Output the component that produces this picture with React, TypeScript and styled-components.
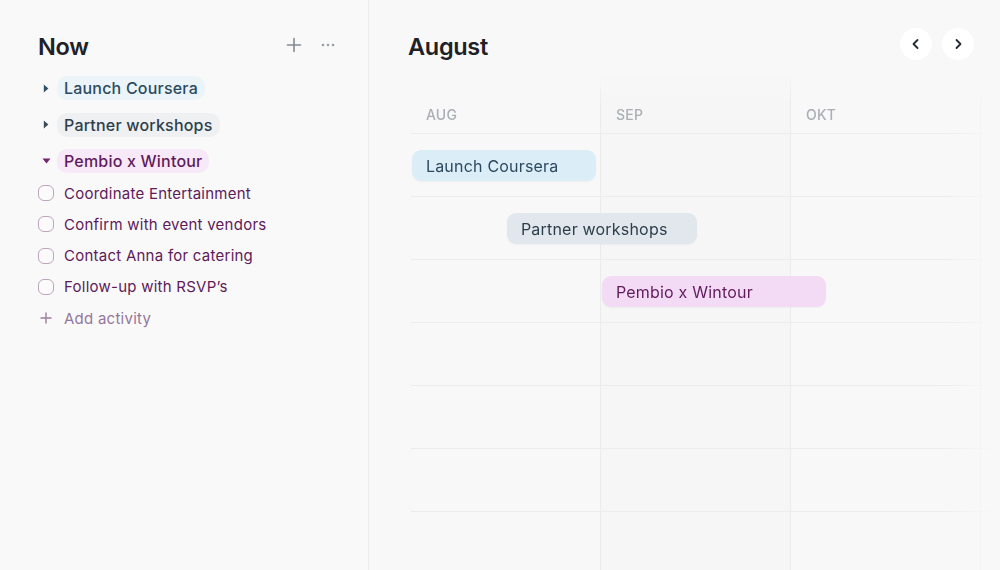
import React from 'react'
import styled, { createGlobalStyle } from 'styled-components'

type Tone = 'blue' | 'slate' | 'plum'

interface ITask {
  id: number
  title: string
}

interface IProject {
  id: number
  title: string
  tone: Tone
  open: boolean
  tasks: ITask[]
  // position on the timeline, in months from the start of AUG
  start: number
  length: number
}

const tones: { [key in Tone]: { pill: string; bar: string; text: string; caret: string } } = {
  blue: { pill: '#ebf4f9', bar: '#dbedf7', text: '#2c4a5e', caret: '#2f5269' },
  slate: { pill: '#eef0f2', bar: '#e1e7ec', text: '#2d3e4b', caret: '#3d4b56' },
  plum: { pill: '#f7e9f7', bar: '#f3dbf6', text: '#611a5b', caret: '#71276b' },
}

const projects: IProject[] = [
  { id: 1, title: 'Launch Coursera', tone: 'blue', open: false, tasks: [], start: 0.005, length: 0.97 },
  { id: 2, title: 'Partner workshops', tone: 'slate', open: false, tasks: [], start: 0.505, length: 1.0 },
  {
    id: 3,
    title: 'Pembio x Wintour',
    tone: 'plum',
    open: true,
    tasks: [
      { id: 1, title: 'Coordinate Entertainment' },
      { id: 2, title: 'Confirm with event vendors' },
      { id: 3, title: 'Contact Anna for catering' },
      { id: 4, title: 'Follow-up with RSVP’s' },
    ],
    start: 1.005,
    length: 1.18,
  },
]

const months = ['AUG', 'SEP', 'OKT']
const COLUMN = 190
const ROWS = 7

export default function App() {
  return (
    <>
      <GlobalStyle />
      <Page>
        <Sidebar>
          <SideHeader>
            <Title>Now</Title>
            <Actions>
              <IconButton aria-label="Add">
                <svg width="16" height="16" viewBox="0 0 16 16" fill="none">
                  <path d="M8 1.5v13M1.5 8h13" stroke="#858b94" strokeWidth="1.6" strokeLinecap="round" />
                </svg>
              </IconButton>
              <IconButton aria-label="More">
                <svg width="16" height="16" viewBox="0 0 16 16" fill="#9aa0a8">
                  <circle cx="3" cy="8" r="1.3" />
                  <circle cx="8" cy="8" r="1.3" />
                  <circle cx="13" cy="8" r="1.3" />
                </svg>
              </IconButton>
            </Actions>
          </SideHeader>

          <ProjectList>
            {projects.map((project) => (
              <Group key={project.id}>
                <GroupRow>
                  <Caret>
                    {project.open ? (
                      <svg width="9" height="6" viewBox="0 0 9 6">
                        <path d="M0.5 0.6h8L4.5 5.4z" fill={tones[project.tone].caret} />
                      </svg>
                    ) : (
                      <svg width="6" height="9" viewBox="0 0 6 9">
                        <path d="M0.8 0.5v8L5.4 4.5z" fill={tones[project.tone].caret} />
                      </svg>
                    )}
                  </Caret>
                  <Pill tone={project.tone}>{project.title}</Pill>
                </GroupRow>

                {project.open && (
                  <TaskList>
                    {project.tasks.map((task) => (
                      <Task key={task.id}>
                        <Checkbox />
                        {task.title}
                      </Task>
                    ))}
                    <AddTask>
                      <AddIcon>
                        <svg width="12" height="12" viewBox="0 0 12 12" fill="none">
                          <path d="M6 1v10M1 6h10" stroke="#9b7f99" strokeWidth="1.4" strokeLinecap="round" />
                        </svg>
                      </AddIcon>
                      Add activity
                    </AddTask>
                  </TaskList>
                )}
              </Group>
            ))}
          </ProjectList>
        </Sidebar>

        <Main>
          <MainHeader>
            <Title>August</Title>
            <Nav>
              <NavButton aria-label="Previous">
                <svg width="14" height="14" viewBox="0 0 14 14" fill="none">
                  <path d="M8.5 3L4.5 7l4 4" stroke="#262b33" strokeWidth="1.8" strokeLinecap="round" strokeLinejoin="round" />
                </svg>
              </NavButton>
              <NavButton aria-label="Next">
                <svg width="14" height="14" viewBox="0 0 14 14" fill="none">
                  <path d="M5.5 3l4 4-4 4" stroke="#262b33" strokeWidth="1.8" strokeLinecap="round" strokeLinejoin="round" />
                </svg>
              </NavButton>
            </Nav>
          </MainHeader>

          <Timeline>
            <HeaderRow>
              {months.map((month, idx) => (
                <MonthCell key={month} current={idx === 1}>
                  {month}
                </MonthCell>
              ))}
            </HeaderRow>

            {Array.from({ length: ROWS }).map((_, idx) => {
              const project = projects[idx]
              return (
                <Row key={idx}>
                  {months.map((month, col) => (
                    <Cell key={month} current={col === 1} />
                  ))}
                  {project && (
                    <Bar
                      tone={project.tone}
                      style={{
                        left: project.start * COLUMN,
                        width: project.length * COLUMN,
                      }}>
                      {project.title}
                    </Bar>
                  )}
                </Row>
              )
            })}
          </Timeline>
        </Main>
      </Page>
    </>
  )
}

const GlobalStyle = createGlobalStyle`
  * {
    box-sizing: border-box;
  }

  body {
    margin: 0;
    background: #f8f8f8;
    font-family: Inter, 'Noto Sans', sans-serif;
    -webkit-font-smoothing: antialiased;
  }
`

const Page = styled.div`
  display: flex;
  width: 1000px;
  height: 570px;
  overflow: hidden;
  background: #f8f8f8;
`

const Sidebar = styled.aside`
  width: 369px;
  flex-shrink: 0;
  padding: 30px 29px 0 38px;
  background: #f9f9f9;
  border-right: 1px solid #ededed;
`

const SideHeader = styled.div`
  display: flex;
  align-items: center;
  justify-content: space-between;
  height: 32px;
`

const Title = styled.h1`
  margin: 0;
  font-size: 23.5px;
  font-weight: 600;
  letter-spacing: -0.3px;
  color: #1e2227;
`

const Actions = styled.div`
  display: flex;
  align-items: center;
  gap: 12px;
  margin-top: -2px;
`

const IconButton = styled.button`
  display: flex;
  align-items: center;
  justify-content: center;
  width: 22px;
  height: 22px;
  padding: 0;
  border: none;
  background: none;
`

const ProjectList = styled.div`
  display: flex;
  flex-direction: column;
  gap: 12.5px;
  margin-top: 14px;
`

const Group = styled.div`
  display: flex;
  flex-direction: column;
`

const GroupRow = styled.div`
  display: flex;
  align-items: center;
  height: 24px;
`

const Caret = styled.span`
  display: flex;
  align-items: center;
  justify-content: center;
  width: 16px;
  margin-right: 3px;
`

const Pill = styled.span<{ tone: Tone }>`
  display: inline-flex;
  align-items: center;
  height: 24px;
  padding: 0 7px 0 7px;
  border-radius: 10px;
  background: ${(props) => tones[props.tone].pill};
  color: ${(props) => tones[props.tone].text};
  font-size: 16px;
  font-weight: 500;
  letter-spacing: 0.2px;
`

const TaskList = styled.div`
  display: flex;
  flex-direction: column;
  gap: 11.25px;
  padding-top: 10px;
`

const Task = styled.label`
  display: flex;
  align-items: center;
  gap: 10px;
  height: 20px;
  font-size: 15px;
  color: #5e1a59;
  letter-spacing: 0.25px;
`

const Checkbox = styled.span`
  width: 16px;
  height: 16px;
  border: 1.5px solid #bea4bc;
  border-radius: 6px;
  background: #fbfbfb;
`

const AddTask = styled.div`
  display: flex;
  align-items: center;
  gap: 10px;
  height: 20px;
  font-size: 15px;
  color: #94779a;
  letter-spacing: 0.25px;
`

const AddIcon = styled.span`
  display: flex;
  align-items: center;
  justify-content: center;
  width: 16px;
`

const Main = styled.main`
  flex: 1;
  min-width: 0;
  padding: 30px 26px 0 39px;
  overflow: hidden;
`

const MainHeader = styled.div`
  display: flex;
  align-items: center;
  justify-content: space-between;
  height: 32px;
`

const Nav = styled.div`
  display: flex;
  gap: 10px;
  margin-top: -4px;
`

const NavButton = styled.button`
  display: flex;
  align-items: center;
  justify-content: center;
  width: 32px;
  height: 32px;
  padding: 0;
  border: none;
  border-radius: 50%;
  background: #ffffff;
`

const Timeline = styled.div`
  width: 582px;
  margin: 14px 0 0 3px;
  -webkit-mask-image: linear-gradient(to right, #000 530px, transparent 582px);
  mask-image: linear-gradient(to right, #000 530px, transparent 582px);
`

const HeaderRow = styled.div`
  display: grid;
  grid-template-columns: repeat(3, ${COLUMN}px) 1fr;
  height: 58px;
  border-bottom: 1px solid #ececec;
`

const MonthCell = styled.div<{ current?: boolean }>`
  display: flex;
  align-items: flex-end;
  padding: 0 0 10px 15px;
  font-size: 14px;
  font-weight: 500;
  letter-spacing: 0.2px;
  color: #abaeb4;
  background:
    linear-gradient(to bottom, rgba(236, 236, 236, 0), #ebebeb 26px) right / 1px 100% no-repeat,
    ${(props) =>
      props.current
        ? 'linear-gradient(to bottom, rgba(246, 246, 246, 0), #f6f6f6 26px)'
        : 'transparent'};
`

const Row = styled.div`
  position: relative;
  display: grid;
  grid-template-columns: repeat(3, ${COLUMN}px) 1fr;
  height: 63px;
  border-bottom: 1px solid #ececec;
`

const Cell = styled.div<{ current?: boolean }>`
  border-right: 1px solid #ebebeb;
  background: ${(props) => (props.current ? '#f6f6f6' : 'transparent')};
`

const Bar = styled.div<{ tone: Tone }>`
  position: absolute;
  top: 16px;
  display: flex;
  align-items: center;
  height: 31px;
  padding-left: 14px;
  border-radius: 9px;
  background: ${(props) => tones[props.tone].bar};
  color: ${(props) => tones[props.tone].text};
  font-size: 16px;
  letter-spacing: 0.2px;
  box-shadow: 0 1px 2px rgba(0, 0, 0, 0.04);
`
